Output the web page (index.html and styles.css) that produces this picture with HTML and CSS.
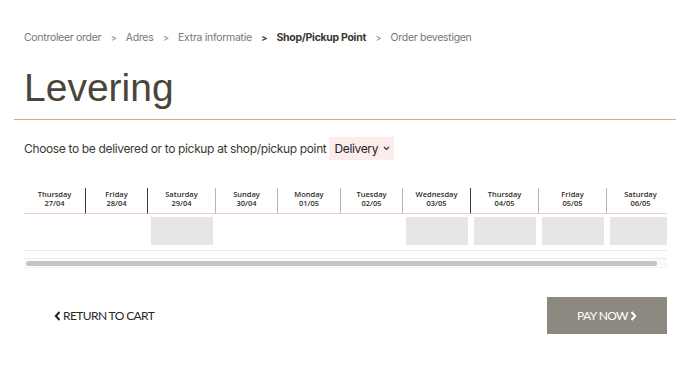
FILE: index.html
```html
<!DOCTYPE html>
<html lang="nl">
<head>
  <meta charset="UTF-8">
  <title>Levering</title>
  <link rel="stylesheet" href="styles.css">
</head>
<body>

<div class="page">
  <!-- Checkout steps -->
  <div class="steps">
    <span class="step">Controleer order</span>
    <span class="sep">&gt;</span>
    <span class="step">Adres</span>
    <span class="sep">&gt;</span>
    <span class="step">Extra informatie</span>
    <span class="sep bold">&gt;</span>
    <span class="step current">Shop/Pickup Point</span>
    <span class="sep">&gt;</span>
    <span class="step">Order bevestigen</span>
  </div>

  <h1 class="title">Levering</h1>
  <div class="rule"></div>

  <div class="choose">
    <span>Choose to be delivered or to pickup at shop/pickup point</span>
    <span class="select">Delivery
      <svg width="7" height="5" viewBox="0 0 7 5"><path d="M1 1l2.5 2.5L6 1" fill="none" stroke="#333" stroke-width="1.2"/></svg>
    </span>
  </div>

  <!-- Delivery calendar -->
  <div class="calendar">
    <div class="days">
      <div class="day w61"><div class="head">Thursday<br>27/04</div><div class="slot"></div></div>
      <div class="day w62 dark"><div class="head">Friday<br>28/04</div><div class="slot"></div></div>
      <div class="day w68 dark"><div class="head">Saturday<br>29/04</div><div class="slot"><div class="box"></div></div></div>
      <div class="day w62"><div class="head">Sunday<br>30/04</div><div class="slot"></div></div>
      <div class="day w63"><div class="head">Monday<br>01/05</div><div class="slot"></div></div>
      <div class="day w62"><div class="head">Tuesday<br>02/05</div><div class="slot"></div></div>
      <div class="day w68"><div class="head">Wednesday<br>03/05</div><div class="slot"><div class="box"></div></div></div>
      <div class="day w68 dark"><div class="head">Thursday<br>04/05</div><div class="slot"><div class="box"></div></div></div>
      <div class="day w68"><div class="head">Friday<br>05/05</div><div class="slot"><div class="box"></div></div></div>
      <div class="day w68"><div class="head">Saturday<br>06/05</div><div class="slot"><div class="box"></div></div></div>
    </div>
    <div class="scrollbar"><div class="thumb"></div></div>
  </div>

  <div class="actions">
    <a class="back" href="#">
      <svg width="7" height="10" viewBox="0 0 7 10"><path d="M5.5 1L1.8 5l3.7 4" fill="none" stroke="#222" stroke-width="2"/></svg>RETURN TO CART
    </a>
    <a class="pay" href="#">PAY NOW
      <svg width="7" height="10" viewBox="0 0 7 10"><path d="M1.5 1l3.7 4-3.7 4" fill="none" stroke="#fff" stroke-width="2"/></svg>
    </a>
  </div>
</div>

</body>
</html>
```

FILE: styles.css
```css
html, body {
  margin: 0;
  padding: 0;
  background: #fff;
  font-family: Inter, "Noto Sans", sans-serif;
  color: #3b3830;
}

.page {
  padding: 0 14px;
}

.steps {
  padding: 30px 10px 0;
  height: 14px;
  font-size: 10.5px;
  letter-spacing: -0.3px;
  color: #7a7770;
  display: flex;
  align-items: center;
  gap: 9.5px;
}

.steps .sep {
  font-size: 9px;
}

.steps .sep.bold {
  font-weight: 700;
  color: #333;
}

.steps .current {
  font-weight: 700;
  color: #3a372f;
}

.title {
  margin: 21px 10px 0;
  font-family: "Liberation Sans", Arial, sans-serif;
  font-weight: 400;
  font-size: 39px;
  line-height: 46px;
  color: #4a4538;
}

.rule {
  margin-top: 8px;
  height: 1px;
  background: #d2ae84;
}

.choose {
  margin: 17px 10px 0;
  display: flex;
  align-items: center;
  font-size: 12px;
  letter-spacing: -0.35px;
  color: #3b3830;
}

.select {
  margin-left: 3px;
  background: #fdecec;
  height: 23px;
  padding: 0 4px 0 5px;
  display: flex;
  align-items: center;
  gap: 5px;
  color: #222;
}

.calendar {
  margin: 28px 9px 0 10px;
  overflow: hidden;
}

.days {
  display: flex;
  width: 700px;
}

.day {
  flex: none;
}

.w61 { width: 61px; }
.w62 { width: 62px; }
.w63 { width: 63px; }
.w68 { width: 68px; }

.head {
  border-bottom: 1px solid #f6c9cc;
  font-family: "Open Sans", sans-serif;
  font-weight: 600;
  font-size: 7.5px;
  line-height: 9px;
  text-align: center;
  padding-top: 2px;
  box-sizing: border-box;
  height: 26px;
  color: #2f2c26;
}

.day + .day .head {
  border-left: 1px solid #b9b6ae;
}

.day.dark .head {
  border-left-color: #3e3a32;
}

.slot {
  border-bottom: 1px solid #fbe3e4;
  padding-top: 3px;
  box-sizing: border-box;
  height: 37px;
}

.box {
  width: 62px;
  height: 28px;
  margin-left: 4px;
  background: #e6e6e6;
}

.scrollbar {
  margin-top: 7px;
  height: 10px;
  border-top: 1px solid #ececec;
  border-bottom: 1px solid #f3f3f3;
  background: #fafafa;
  padding: 2px 10px 0 2px;
  box-sizing: border-box;
}

.thumb {
  height: 5px;
  border-radius: 3px;
  background: #c4c4c4;
}

.actions {
  margin: 29px 9px 0 10px;
  display: flex;
  justify-content: space-between;
  align-items: center;
}

.actions a {
  text-decoration: none;
  font-family: Lato, sans-serif;
  font-size: 12px;
  letter-spacing: -0.6px;
  display: flex;
  align-items: center;
  gap: 2px;
}

.back {
  margin-left: 30px;
  color: #2b2924;
}

.pay {
  width: 120px;
  height: 37px;
  justify-content: center;
  background: #8d8981;
  color: #fff;
}
```
